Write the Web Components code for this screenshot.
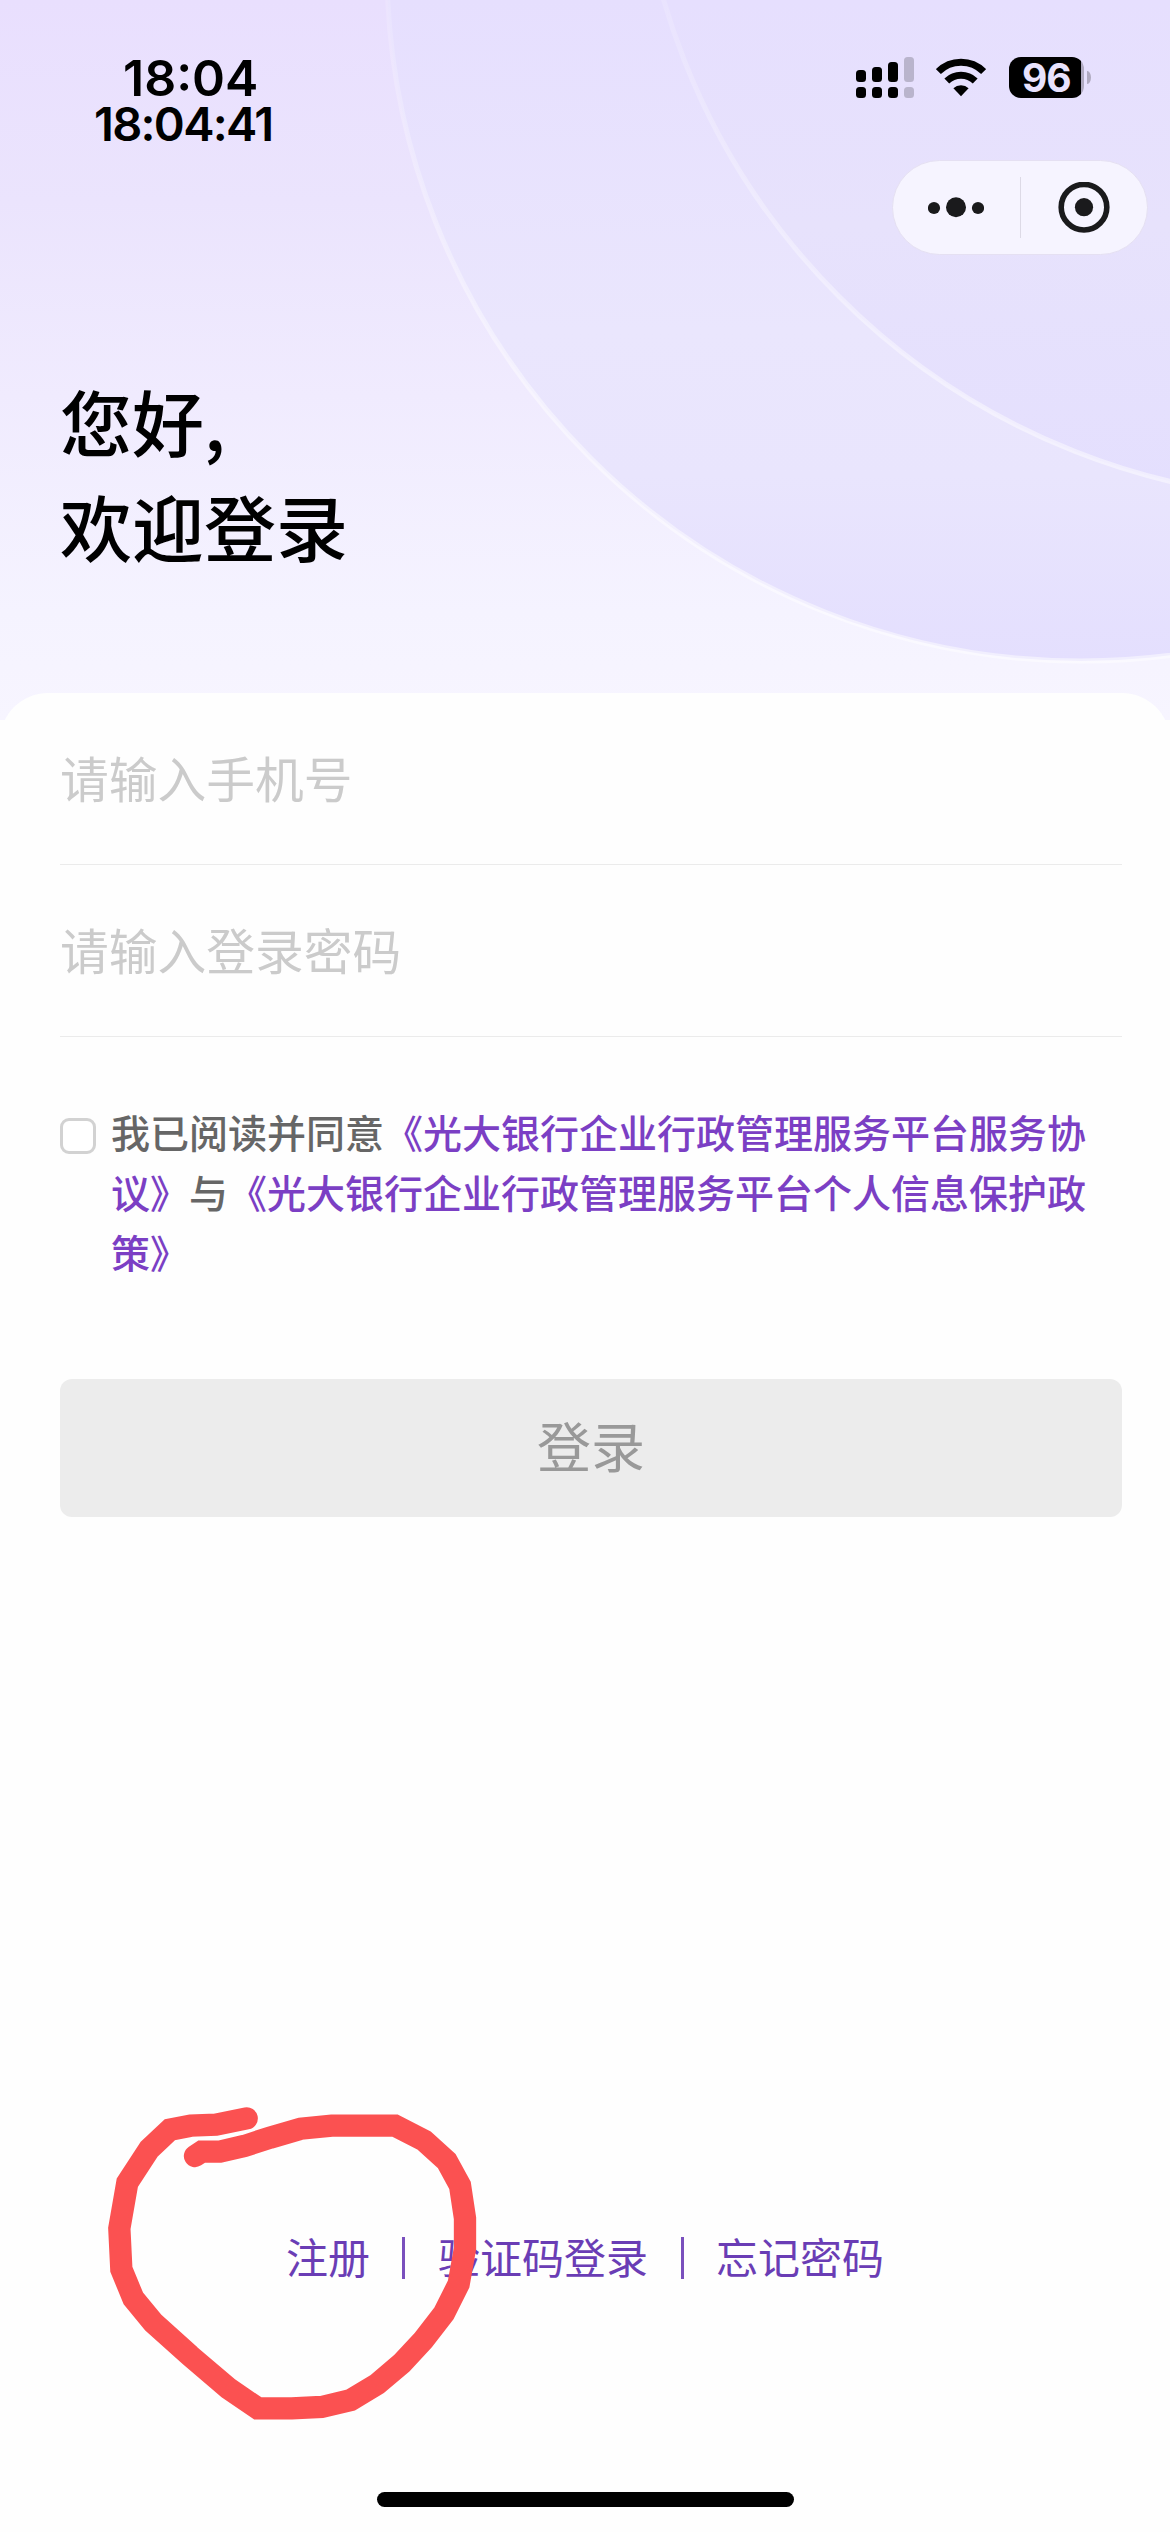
<!DOCTYPE html>
<html lang="zh-CN">
<head>
<meta charset="UTF-8">
<title>登录</title>
<style>
    body {
        margin: 0;
        width: 1170px;
        height: 2532px;
        overflow: hidden;
        background: #fefefe;
        font-family: "Noto Sans CJK SC", sans-serif;
    }
</style>
</head>
<body>
<login-page></login-page>

<script>
class BaseElement extends HTMLElement {
    constructor() {
        super()
        this.attachShadow({mode: "open"});
    }

    render(){
        const TEMPLATE = document.createElement('template');
        TEMPLATE.innerHTML = this.getTemplate() + this.getStyles();
        this.shadowRoot.appendChild(TEMPLATE.content.cloneNode(true));
    }

    connectedCallback(){
        if (!this.shadowRoot.childNodes.length) this.render();
    }
}

class StatusBar extends BaseElement {
    getTemplate(){
        return /*html*/ `
            <div class="times">
                <span class="clock">18:04</span>
                <span class="seconds">18:04:41</span>
            </div>
            <div class="icons">
                <svg width="58" height="42" viewBox="0 0 58 42">
                    <rect x="0" y="13" width="10" height="12" rx="3.5"/>
                    <rect x="16" y="10" width="10" height="15" rx="3.5"/>
                    <rect x="32" y="5" width="10" height="20" rx="3.5"/>
                    <rect x="0" y="30" width="10" height="11" rx="3.5"/>
                    <rect x="16" y="30" width="10" height="11" rx="3.5"/>
                    <rect x="32" y="30" width="10" height="11" rx="3.5"/>
                    <g fill="#b9b4cc">
                        <rect x="48" y="0" width="10" height="25" rx="3.5"/>
                        <rect x="48" y="30" width="10" height="11" rx="3.5"/>
                    </g>
                </svg>
                <svg width="50" height="42" viewBox="0 0 50 42">
                    <g fill="none" stroke="#000" stroke-width="7">
                        <path d="M2.4 14.6a32 32 0 0 1 45.2 0"/>
                        <path d="M10.8 24a20.6 20.6 0 0 1 28.4 0"/>
                    </g>
                    <path d="M17.4 31.3a11 11 0 0 1 15.2 0L25 39.2z"/>
                </svg>
                <div class="battery"><b>96</b></div>
            </div>
        `
    }

    getStyles(){
        return /*html*/ `
            <style>
                :host {
                    display: flex;
                    justify-content: space-between;
                    box-sizing: border-box;
                    height: 160px;
                    padding: 53px 79px 0 94px;
                    font-family: Inter, sans-serif;
                    font-weight: 600;
                    color: #000;
                }
                .times {
                    display: flex;
                    flex-direction: column;
                    white-space: nowrap;
                }
                .clock {
                    font-size: 50px;
                    line-height: 50px;
                    padding-left: 29px;
                    letter-spacing: 0;
                }
                .seconds {
                    font-size: 47px;
                    line-height: 41px;
                    letter-spacing: -1.7px;
                }
                .icons {
                    display: flex;
                    align-items: flex-start;
                    padding-top: 4px;
                }
                svg + svg { margin-left: 22px; }
                .battery {
                    position: relative;
                    margin: 0 7px 0 22.5px;
                    width: 75.5px;
                    height: 41px;
                    border-radius: 12px;
                    background: linear-gradient(90deg, #000 72.5px, #b0aac0 72.5px);
                    display: flex;
                    align-items: center;
                    justify-content: center;
                }
                .battery::after {
                    content: "";
                    position: absolute;
                    left: 78.5px;
                    top: 14px;
                    width: 4px;
                    height: 13px;
                    border-radius: 0 4px 4px 0 / 0 7px 7px 0;
                    background: #b0aac0;
                }
                b {
                    font-size: 39px;
                    line-height: 41px;
                    font-weight: 700;
                    letter-spacing: -1px;
                    color: #e8e2fd;
                }
            </style>
        `
    }
}

class MiniCapsule extends BaseElement {
    getTemplate(){
        return /*html*/ `
            <div>
                <svg width="56" height="52" viewBox="0 0 56 52">
                    <circle cx="6" cy="26" r="6.1"/>
                    <circle cx="28" cy="25.3" r="10"/>
                    <circle cx="50" cy="26" r="6.1"/>
                </svg>
            </div>
            <i></i>
            <div>
                <svg width="52" height="52" viewBox="0 0 52 52">
                    <circle cx="26" cy="25.2" r="22.8" fill="none" stroke="#1a1a1c" stroke-width="5.6"/>
                    <circle cx="26" cy="25.2" r="9.1"/>
                </svg>
            </div>
        `
    }

    getStyles(){
        return /*html*/ `
            <style>
                :host {
                    display: flex;
                    align-items: center;
                    box-sizing: border-box;
                    width: 256px;
                    height: 95px;
                    margin: 0 22px 0 auto;
                    border: 1px solid #e5e0f2;
                    border-radius: 48px;
                    background: #f6f4ff;
                }
                div {
                    flex: 1;
                    display: flex;
                    justify-content: center;
                }
                i {
                    width: 1px;
                    height: 61px;
                    background: #dddae6;
                }
                svg { fill: #1a1a1c; }
            </style>
        `
    }
}

class LoginHero extends BaseElement {
    getTemplate(){
        return /*html*/ `
            <svg class="rings" width="1170" height="720" viewBox="0 0 1170 720">
                <defs>
                    <linearGradient id="outer" gradientUnits="userSpaceOnUse" x1="0" y1="0" x2="0" y2="661">
                        <stop offset="0" stop-color="#e6dffe"/>
                        <stop offset=".5" stop-color="#eae6fd"/>
                        <stop offset=".72" stop-color="#e9e5fd"/>
                        <stop offset="1" stop-color="#e4dffe"/>
                    </linearGradient>
                    <linearGradient id="inner" gradientUnits="userSpaceOnUse" x1="0" y1="0" x2="0" y2="500">
                        <stop offset="0" stop-color="#e6dffe"/>
                        <stop offset=".45" stop-color="#e7e2fc"/>
                        <stop offset="1" stop-color="#e4dffe"/>
                    </linearGradient>
                    <linearGradient id="line" gradientUnits="userSpaceOnUse" x1="0" y1="0" x2="0" y2="661">
                        <stop offset="0" stop-color="#fff" stop-opacity=".14"/>
                        <stop offset=".6" stop-color="#fff" stop-opacity=".45"/>
                        <stop offset="1" stop-color="#fff" stop-opacity=".5"/>
                    </linearGradient>
                </defs>
                <circle cx="1081" cy="-33" r="694" fill="url(#outer)" stroke="url(#line)" stroke-width="5"/>
                <circle cx="1330" cy="-194" r="694" fill="url(#inner)" stroke="url(#line)" stroke-width="5"/>
            </svg>
            <div class="content"><slot></slot></div>
        `
    }

    getStyles(){
        return /*html*/ `
            <style>
                :host {
                    display: block;
                    position: relative;
                    height: 720px;
                    background: linear-gradient(180deg, #e9dffe 0%, #ebe4fd 28%, #f0ebfe 55%, #f5f3ff 85%, #f7f5ff 100%);
                }
                .rings {
                    position: absolute;
                    left: 0;
                    top: 0;
                }
                .content { position: relative; }
                ::slotted(h1) {
                    margin: 112px 60px 0;
                    font-size: 72px;
                    line-height: 105px;
                    font-weight: 500;
                    color: #000;
                }
            </style>
        `
    }
}

class FormField extends BaseElement {
    getTemplate(){
        return /*html*/ `<slot></slot>`
    }

    getStyles(){
        return /*html*/ `
            <style>
                :host {
                    display: block;
                    box-sizing: border-box;
                    height: 172px;
                    padding-top: 48px;
                    border-bottom: 1px solid #ebebeb;
                    font-size: 48.75px;
                    line-height: 72px;
                    font-weight: 400;
                    color: #cbcbcb;
                }
            </style>
        `
    }
}

class AgreementCheck extends BaseElement {
    getTemplate(){
        return /*html*/ `
            <span class="box"></span>
            <p><slot></slot></p>
        `
    }

    getStyles(){
        return /*html*/ `
            <style>
                :host {
                    display: flex;
                    align-items: flex-start;
                    margin-top: 64px;
                }
                .box {
                    flex: none;
                    box-sizing: border-box;
                    width: 36px;
                    height: 36px;
                    margin: 17px 15px 0 0;
                    border: 3px solid #d2d2d2;
                    border-radius: 9px;
                    background: #fff;
                }
                p {
                    margin: 0;
                    font-size: 39px;
                    line-height: 60px;
                    font-weight: 500;
                    color: #666;
                }
                ::slotted(a) { color: #7b3fc4; }
            </style>
        `
    }
}

class SubmitButton extends BaseElement {
    getTemplate(){
        return /*html*/ `<slot></slot>`
    }

    getStyles(){
        return /*html*/ `
            <style>
                :host {
                    display: flex;
                    align-items: center;
                    justify-content: center;
                    box-sizing: border-box;
                    height: 138px;
                    margin-top: 98px;
                    padding-bottom: 8px;
                    border-radius: 12px;
                    background: #ececec;
                    font-size: 54px;
                    color: #999;
                }
            </style>
        `
    }
}

class FooterLinks extends BaseElement {
    getTemplate(){
        return /*html*/ `
            <a>注册</a><i></i><a>验证码登录</a><i></i><a>忘记密码</a>
        `
    }

    getStyles(){
        return /*html*/ `
            <style>
                :host {
                    display: flex;
                    align-items: center;
                    justify-content: center;
                    height: 60px;
                    font-size: 42px;
                    line-height: 60px;
                    color: #6a3db5;
                }
                a { padding-bottom: 5px; }
                i {
                    width: 3px;
                    height: 42px;
                    margin: 0 32.5px;
                    background: #7a50bd;
                }
            </style>
        `
    }
}

// hand drawn circle that lies over the footer
class MarkerStroke extends BaseElement {
    getTemplate(){
        return /*html*/ `
            <svg width="420" height="360" viewBox="0 0 1260 1080">
                <path fill="none" stroke="#fb5151" stroke-width="67" stroke-linecap="round" stroke-linejoin="miter"
                    d="M470 115L378 134L302 137L240 149L178 207L112 308L88 445L94 568L130 655L190 728L300 827L415 925L503 985L605 985L695 981L782 960L862 912L935 850L1000 780L1062 700L1106 612L1125 505L1125 415L1110 316L1070 243L1003 182L915 137L725 137L632 146L540 173L463 198L390 215L335 215L315 228"/>
            </svg>
        `
    }

    getStyles(){
        return /*html*/ `
            <style>
                :host {
                    position: absolute;
                    left: 90px;
                    top: 2080px;
                }
                svg { display: block; }
            </style>
        `
    }
}

class LoginPage extends BaseElement {
    getTemplate(){
        return /*html*/ `
            <login-hero>
                <status-bar></status-bar>
                <mini-capsule></mini-capsule>
                <h1>您好,<br>欢迎登录</h1>
            </login-hero>
            <main>
                <form-field>请输入手机号</form-field>
                <form-field>请输入登录密码</form-field>
                <agreement-check>我已阅读并同意<a>《光大银行企业行政管理服务平台服务协议》</a>与<a>《光大银行企业行政管理服务平台个人信息保护政策》</a></agreement-check>
                <submit-button>登录</submit-button>
            </main>
            <footer-links></footer-links>
            <div class="home"></div>
            <marker-stroke></marker-stroke>
        `
    }

    getStyles(){
        return /*html*/ `
            <style>
                :host {
                    display: flex;
                    flex-direction: column;
                    position: relative;
                    height: 2532px;
                }
                main {
                    flex: 1;
                    position: relative;
                    margin-top: -27px;
                    padding: 0 48px 0 60px;
                    border-radius: 48px 48px 0 0;
                    background: #fefefe;
                }
                .home {
                    width: 417px;
                    height: 15px;
                    margin: 204px auto 25px;
                    border-radius: 8px;
                    background: #000;
                }
            </style>
        `
    }
}

customElements.define('status-bar', StatusBar);
customElements.define('mini-capsule', MiniCapsule);
customElements.define('login-hero', LoginHero);
customElements.define('form-field', FormField);
customElements.define('agreement-check', AgreementCheck);
customElements.define('submit-button', SubmitButton);
customElements.define('footer-links', FooterLinks);
customElements.define('marker-stroke', MarkerStroke);
customElements.define('login-page', LoginPage);
</script>
</body>
</html>
